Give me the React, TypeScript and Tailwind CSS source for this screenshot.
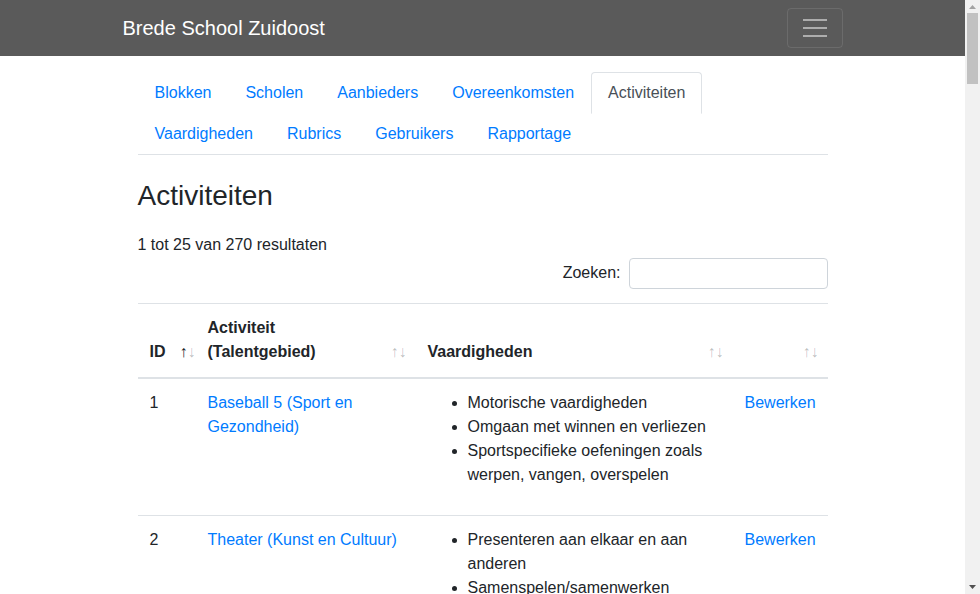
import React from 'react';

type Row = {
  id: number;
  name: string;
  skills: string[];
};

const tabs = [
  'Blokken',
  'Scholen',
  'Aanbieders',
  'Overeenkomsten',
  'Activiteiten',
  'Vaardigheden',
  'Rubrics',
  'Gebruikers',
  'Rapportage',
];

const rows: Row[] = [
  {
    id: 1,
    name: 'Baseball 5 (Sport en Gezondheid)',
    skills: [
      'Motorische vaardigheden',
      'Omgaan met winnen en verliezen',
      'Sportspecifieke oefeningen zoals werpen, vangen, overspelen',
    ],
  },
  {
    id: 2,
    name: 'Theater (Kunst en Cultuur)',
    skills: [
      'Presenteren aan elkaar en aan anderen',
      'Samenspelen/samenwerken',
      'Fantasie en verbeelding',
    ],
  },
  {
    id: 3,
    name: 'Koken (Natuur en Techniek)',
    skills: ['Samenwerken', 'Recepten lezen en volgen', 'Hygiëne in de keuken'],
  },
];

const SortArrows: React.FC<{ active?: boolean }> = ({ active }) => (
  <span className="shrink-0 font-normal text-base leading-6 whitespace-nowrap">
    <span className={active ? 'text-[#212529]' : 'text-[#212529]/30'}>↑</span>
    <span className="text-[#212529]/30">↓</span>
  </span>
);

const HeaderCell: React.FC<{ label: React.ReactNode; width: string; active?: boolean }> = ({
  label,
  width,
  active,
}) => (
  <th className={`${width} pl-3 pr-[9px] pt-3 pb-[13px] align-bottom text-left font-bold`}>
    <div className="flex items-end justify-between gap-[14px]">
      <span>{label}</span>
      <SortArrows active={active} />
    </div>
  </th>
);

// window scrollbar as seen in the screenshot
const Scrollbar = () => (
  <div className="w-[15px] shrink-0 bg-[#f1f1f1] flex flex-col items-center">
    <svg width="15" height="13" viewBox="0 0 15 13" className="shrink-0">
      <path d="M4 9 L7.5 5 L11 9 Z" fill="#a3a3a3" />
    </svg>
    <div className="w-[11px] h-[71px] bg-[#c1c1c1]" />
    <div className="flex-1" />
    <svg width="15" height="13" viewBox="0 0 15 13" className="shrink-0">
      <path d="M4 4 L7.5 8 L11 4 Z" fill="#505050" />
    </svg>
  </div>
);

export default function App() {
  return (
    <div className="h-screen flex overflow-hidden bg-white font-['Liberation_Sans',Arial,sans-serif] text-base leading-6 text-[#212529]">
      <div className="flex-1 min-w-0 overflow-hidden">
        <nav className="bg-[#5a5a5a] h-14">
          <div className="w-[720px] mx-auto h-full flex items-center justify-between">
            <a href="#" className="text-xl leading-[30px] text-white">
              Brede School Zuidoost
            </a>
            <button className="w-14 h-10 border border-white/10 rounded flex flex-col items-center justify-center gap-[6px]">
              <span className="block w-6 h-[2px] bg-white/50" />
              <span className="block w-6 h-[2px] bg-white/50" />
              <span className="block w-6 h-[2px] bg-white/50" />
            </button>
          </div>
        </nav>

        <div className="w-[720px] mx-auto px-[15px] pb-10">
          <ul className="mt-4 flex flex-wrap border-b border-[#dee2e6]">
            {tabs.map((t) => {
              const active = t === 'Activiteiten';
              return (
                <li key={t} className="-mb-px">
                  <a
                    href="#"
                    className={
                      active
                        ? 'block px-4 py-2 border border-[#dee2e6] border-b-white rounded-t bg-white text-[#495057]'
                        : 'block px-4 py-2 border border-transparent rounded-t text-[#007bff]'
                    }
                  >
                    {t}
                  </a>
                </li>
              );
            })}
          </ul>

          <h3 className="mt-6 mb-2 text-[28px] leading-[1.2] font-normal">Activiteiten</h3>

          <div className="mt-5">1 tot 25 van 270 resultaten</div>

          <div className="mt-px flex justify-end items-center">
            <label className="flex items-center gap-2">
              Zoeken:
              <input
                type="text"
                className="w-[199px] h-[31px] px-2 text-sm border border-[#ced4da] rounded outline-none"
              />
            </label>
          </div>

          <table className="mt-[14px] w-full table-fixed border-collapse">
            <thead>
              <tr className="border-t border-[#dee2e6] border-b-2">
                <HeaderCell label="ID" width="w-[58px]" active />
                <HeaderCell label="Activiteit (Talentgebied)" width="w-[220px]" />
                <HeaderCell label="Vaardigheden" width="w-[317px]" />
                <HeaderCell label="" width="w-[95px]" />
              </tr>
            </thead>
            <tbody>
              {rows.map((r) => (
                <tr key={r.id} className="border-t border-[#dee2e6] align-top">
                  <td className="p-3">{r.id}</td>
                  <td className="p-3">
                    <a href="#" className="text-[#007bff]">
                      {r.name}
                    </a>
                  </td>
                  <td className="p-3">
                    <ul className="list-disc pl-10 mb-4">
                      {r.skills.map((s) => (
                        <li key={s}>{s}</li>
                      ))}
                    </ul>
                  </td>
                  <td className="p-3">
                    <a href="#" className="text-[#007bff]">
                      Bewerken
                    </a>
                  </td>
                </tr>
              ))}
            </tbody>
          </table>
        </div>
      </div>
      <Scrollbar />
    </div>
  );
}
